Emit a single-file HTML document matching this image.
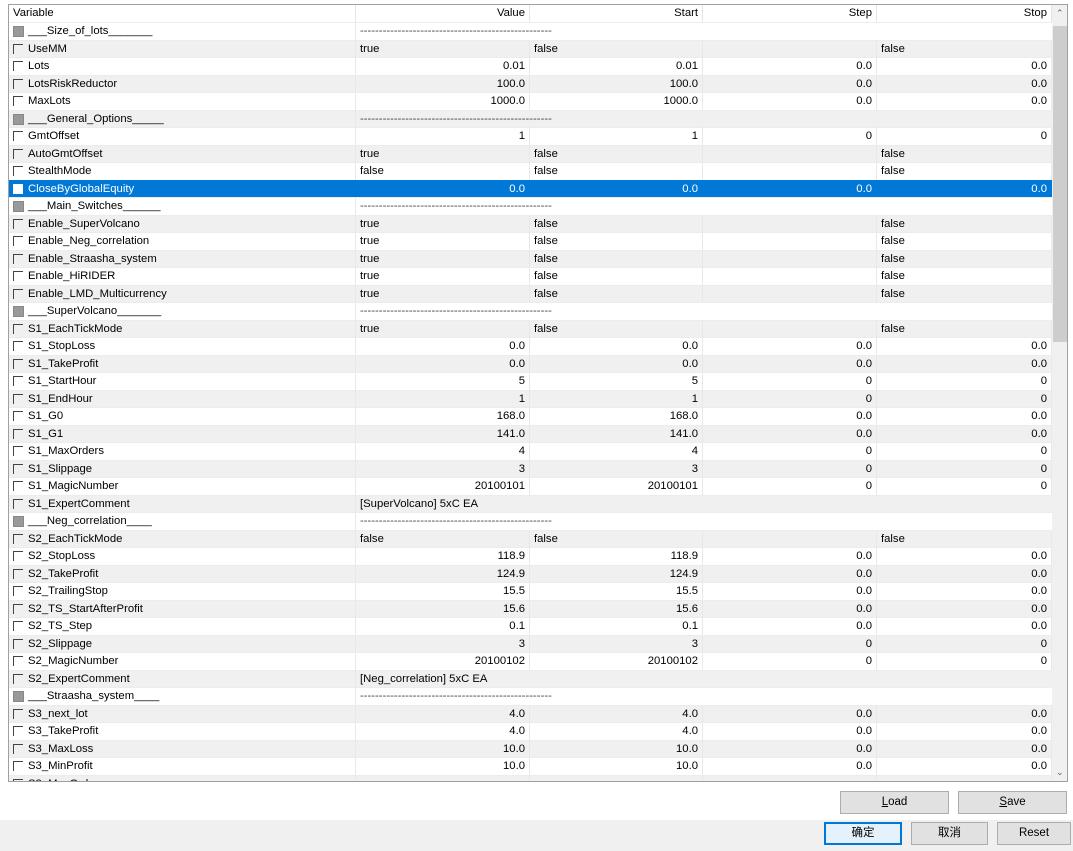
<!DOCTYPE html>
<html><head><meta charset="utf-8"><style>
*{box-sizing:border-box;margin:0;padding:0}
body{width:1073px;height:851px;background:#fff;font-family:"Liberation Sans","Noto Sans CJK SC",sans-serif;font-size:11.3px;color:#000;position:relative;overflow:hidden}
#tbl{position:absolute;left:8px;top:4px;width:1060px;height:778px;border:1px solid #a0a0a0;overflow:hidden}
.h,.r{display:grid;grid-template-columns:347px 174px 173px 174px 175px;height:17.5px;line-height:17.5px;white-space:nowrap}
.h{height:17px}
.h span{border-right:1px solid #e5e5e5;padding:0 4px;text-align:right}
.h span:first-child{text-align:left}
.r span{border-right:1px solid #e8e8e8;border-top:1px solid #ececec;padding:0 4px;text-align:right;overflow:hidden}
.r span.t{text-align:left}
.r span:first-child{text-align:left;padding-left:19px;position:relative}
.r span:first-child:before{content:"";position:absolute;left:4px;top:3px;width:9px;height:9px;border-left:1px solid #444;border-top:1px solid #444}
.r.s span:first-child:before{background:#999;border:1px solid #888}
.g{background:#f0f0f0}
.sel{background:#0078d7;color:#fff}
.sel span{border-color:#0078d7}
.sel span:first-child:before{border-color:#fff;background:#fff}
.sep span:nth-child(2){grid-column:2/6;text-align:left;border-right:none;color:#444}
.cm span:nth-child(2){grid-column:2/6;text-align:left;border-right:none}
#sb{position:absolute;left:1043px;top:0;width:16px;height:776px;background:#f0f0f0}
#th{position:absolute;left:1px;top:21px;width:14px;height:316px;background:#cdcdcd}
.ar{position:absolute;left:4px;font-size:9px;color:#606060}
.btn{position:absolute;height:23px;background:#e1e1e1;border:1px solid #adadad;text-align:center;line-height:21px;font-size:11.5px}
#bot{position:absolute;left:0;top:820px;width:1073px;height:31px;background:#f0f0f0}
</style></head><body>
<div id="tbl">
<div class="h"><span>Variable</span><span>Value</span><span>Start</span><span>Step</span><span>Stop</span></div>
<div class="r s sep"><span>___Size_of_lots_______</span><span>---------------------------------------------------</span></div>
<div class="r g"><span>UseMM</span><span class="t">true</span><span class="t">false</span><span></span><span class="t">false</span></div>
<div class="r"><span>Lots</span><span>0.01</span><span>0.01</span><span>0.0</span><span>0.0</span></div>
<div class="r g"><span>LotsRiskReductor</span><span>100.0</span><span>100.0</span><span>0.0</span><span>0.0</span></div>
<div class="r"><span>MaxLots</span><span>1000.0</span><span>1000.0</span><span>0.0</span><span>0.0</span></div>
<div class="r g s sep"><span>___General_Options_____</span><span>---------------------------------------------------</span></div>
<div class="r"><span>GmtOffset</span><span>1</span><span>1</span><span>0</span><span>0</span></div>
<div class="r g"><span>AutoGmtOffset</span><span class="t">true</span><span class="t">false</span><span></span><span class="t">false</span></div>
<div class="r"><span>StealthMode</span><span class="t">false</span><span class="t">false</span><span></span><span class="t">false</span></div>
<div class="r sel"><span>CloseByGlobalEquity</span><span>0.0</span><span>0.0</span><span>0.0</span><span>0.0</span></div>
<div class="r s sep"><span>___Main_Switches______</span><span>---------------------------------------------------</span></div>
<div class="r g"><span>Enable_SuperVolcano</span><span class="t">true</span><span class="t">false</span><span></span><span class="t">false</span></div>
<div class="r"><span>Enable_Neg_correlation</span><span class="t">true</span><span class="t">false</span><span></span><span class="t">false</span></div>
<div class="r g"><span>Enable_Straasha_system</span><span class="t">true</span><span class="t">false</span><span></span><span class="t">false</span></div>
<div class="r"><span>Enable_HiRIDER</span><span class="t">true</span><span class="t">false</span><span></span><span class="t">false</span></div>
<div class="r g"><span>Enable_LMD_Multicurrency</span><span class="t">true</span><span class="t">false</span><span></span><span class="t">false</span></div>
<div class="r s sep"><span>___SuperVolcano_______</span><span>---------------------------------------------------</span></div>
<div class="r g"><span>S1_EachTickMode</span><span class="t">true</span><span class="t">false</span><span></span><span class="t">false</span></div>
<div class="r"><span>S1_StopLoss</span><span>0.0</span><span>0.0</span><span>0.0</span><span>0.0</span></div>
<div class="r g"><span>S1_TakeProfit</span><span>0.0</span><span>0.0</span><span>0.0</span><span>0.0</span></div>
<div class="r"><span>S1_StartHour</span><span>5</span><span>5</span><span>0</span><span>0</span></div>
<div class="r g"><span>S1_EndHour</span><span>1</span><span>1</span><span>0</span><span>0</span></div>
<div class="r"><span>S1_G0</span><span>168.0</span><span>168.0</span><span>0.0</span><span>0.0</span></div>
<div class="r g"><span>S1_G1</span><span>141.0</span><span>141.0</span><span>0.0</span><span>0.0</span></div>
<div class="r"><span>S1_MaxOrders</span><span>4</span><span>4</span><span>0</span><span>0</span></div>
<div class="r g"><span>S1_Slippage</span><span>3</span><span>3</span><span>0</span><span>0</span></div>
<div class="r"><span>S1_MagicNumber</span><span>20100101</span><span>20100101</span><span>0</span><span>0</span></div>
<div class="r g cm"><span>S1_ExpertComment</span><span>[SuperVolcano] 5xC EA</span></div>
<div class="r s sep"><span>___Neg_correlation____</span><span>---------------------------------------------------</span></div>
<div class="r g"><span>S2_EachTickMode</span><span class="t">false</span><span class="t">false</span><span></span><span class="t">false</span></div>
<div class="r"><span>S2_StopLoss</span><span>118.9</span><span>118.9</span><span>0.0</span><span>0.0</span></div>
<div class="r g"><span>S2_TakeProfit</span><span>124.9</span><span>124.9</span><span>0.0</span><span>0.0</span></div>
<div class="r"><span>S2_TrailingStop</span><span>15.5</span><span>15.5</span><span>0.0</span><span>0.0</span></div>
<div class="r g"><span>S2_TS_StartAfterProfit</span><span>15.6</span><span>15.6</span><span>0.0</span><span>0.0</span></div>
<div class="r"><span>S2_TS_Step</span><span>0.1</span><span>0.1</span><span>0.0</span><span>0.0</span></div>
<div class="r g"><span>S2_Slippage</span><span>3</span><span>3</span><span>0</span><span>0</span></div>
<div class="r"><span>S2_MagicNumber</span><span>20100102</span><span>20100102</span><span>0</span><span>0</span></div>
<div class="r g cm"><span>S2_ExpertComment</span><span>[Neg_correlation] 5xC EA</span></div>
<div class="r s sep"><span>___Straasha_system____</span><span>---------------------------------------------------</span></div>
<div class="r g"><span>S3_next_lot</span><span>4.0</span><span>4.0</span><span>0.0</span><span>0.0</span></div>
<div class="r"><span>S3_TakeProfit</span><span>4.0</span><span>4.0</span><span>0.0</span><span>0.0</span></div>
<div class="r g"><span>S3_MaxLoss</span><span>10.0</span><span>10.0</span><span>0.0</span><span>0.0</span></div>
<div class="r"><span>S3_MinProfit</span><span>10.0</span><span>10.0</span><span>0.0</span><span>0.0</span></div>
<div class="r g"><span>S3_MaxOrders</span><span></span><span></span><span></span><span></span></div>
<div id="sb"><div class="ar" style="top:3px">&#8963;</div><div id="th"></div><div class="ar" style="top:762px">&#8964;</div></div>
</div>
<div class="btn" style="left:840px;top:791px;width:109px"><u>L</u>oad</div>
<div class="btn" style="left:958px;top:791px;width:109px"><u>S</u>ave</div>
<div id="bot"></div>
<div class="btn" style="left:824px;top:822px;width:78px;border:2px solid #0078d7;background:#e5f1fb;line-height:19px">确定</div>
<div class="btn" style="left:911px;top:822px;width:77px">取消</div>
<div class="btn" style="left:997px;top:822px;width:74px">Reset</div>
</body></html>
